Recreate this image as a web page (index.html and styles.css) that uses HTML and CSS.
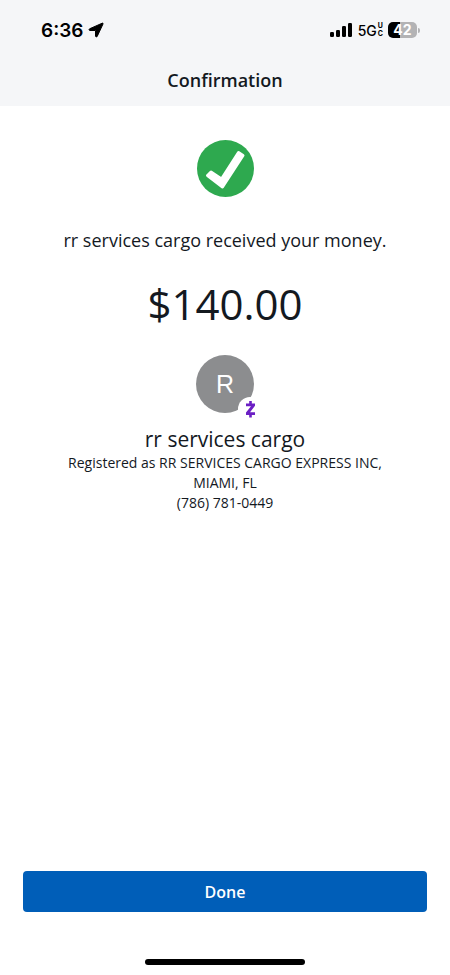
FILE: index.html
```html
<!DOCTYPE html>
<html lang="en">
<head>
<meta charset="utf-8">
<meta name="viewport" content="width=device-width, initial-scale=1">
<title>Confirmation</title>
<link rel="stylesheet" href="styles.css">
</head>
<body>
<div class="screen">
  <header class="top">
    <div class="status">
      <div class="status-group">
        <span class="clock">6:36</span>
        <svg class="location" viewBox="0 0 16 16" width="16" height="16" aria-hidden="true">
          <path d="M14.2 1.2 1.6 6.800c-.8.4-.6 1.700.3 1.700h5.300c.2 0 .3.1.3.3v5.300c0 .9 1.300 1.100 1.700.3L15 2c.3-.6-.2-1.100-.8-.8Z" fill="#000" stroke="#000" stroke-width="1"/>
        </svg>
      </div>
      <div class="status-group">
        <svg viewBox="0 0 24 16" width="24" height="16" aria-hidden="true">
          <rect x="1" y="10" width="4" height="5" rx="1.2"/>
          <rect x="7" y="8" width="4" height="7" rx="1.2"/>
          <rect x="13" y="4" width="4" height="11" rx="1.2"/>
          <rect x="19" y="1" width="4" height="14" rx="1.2"/>
        </svg>
        <span class="network">5G<span class="uc"><span>U</span><span>C</span></span></span>
        <span class="battery"><span class="battery-body">42</span><span class="battery-tip"></span></span>
      </div>
    </div>
    <h1 class="title">Confirmation</h1>
  </header>

  <main class="content">
    <svg class="check" viewBox="0 0 57 57" width="57" height="57" role="img" aria-label="Success">
      <circle cx="28.5" cy="28.5" r="28.5" fill="#2ea94f"/>
      <path d="M10.500 35.500 14 32 24.500 39 41.500 12.500 46 15.500 25.500 47Z" fill="#fff" stroke="#fff" stroke-width="3" stroke-linejoin="round"/>
    </svg>
    <p class="message">rr services cargo received your money.</p>
    <p class="amount">$140.00</p>
    <div class="avatar">
      <span>R</span>
      <svg class="badge" viewBox="0 0 24 24" width="24" height="24" role="img" aria-label="Zelle">
        <circle cx="12" cy="12" r="12" fill="#fff"/>
        <path d="M8 6.500h9v2.300L12 15.200h5V18H8v-2.500L13 9.300H8ZM11.200 4h2.600v3h-2.600ZM11.200 17h2.600v3.500h-2.600Z" fill="#6b1fc4"/>
      </svg>
    </div>
    <h2 class="name">rr services cargo</h2>
    <p class="details">Registered as RR SERVICES CARGO EXPRESS INC, MIAMI, FL</p>
    <p class="details">(786) 781-0449</p>
  </main>

  <footer class="bottom">
    <button class="done" type="button">Done</button>
    <div class="home-bar"></div>
  </footer>
</div>
</body>
</html>
```
FILE: styles.css
```css
* {
  box-sizing: border-box;
}

body,
h1,
h2,
p {
  margin: 0;
}

body {
  background: #fff;
  color: #14191f;
  font-family: "Open Sans", sans-serif;
}

.screen {
  display: flex;
  flex-direction: column;
  min-height: 100vh;
}

.top {
  background: #f5f6f8;
  padding: 18px 30px 12px 41px;
}

.status {
  display: flex;
  align-items: center;
  justify-content: space-between;
  height: 24px;
  color: #000;
  font-family: Inter, sans-serif;
}

.status-group {
  display: flex;
  align-items: center;
  gap: 5px;
}

.clock {
  font-size: 19px;
  font-weight: 600;
}

.network {
  display: flex;
  align-items: center;
  font-size: 14px;
  font-weight: 500;
}

.uc {
  display: flex;
  flex-direction: column;
  padding-left: 1px;
  font-size: 7px;
  font-weight: 700;
  line-height: 8px;
}

.battery {
  display: flex;
  align-items: center;
  gap: 1px;
}

.battery-body {
  width: 29px;
  border-radius: 5px;
  background: linear-gradient(90deg, #000 42%, #b3b3b5 42%);
  color: #fff;
  font-size: 14px;
  font-weight: 700;
  line-height: 16px;
  text-align: center;
}

.battery-tip {
  width: 2px;
  height: 5px;
  border-radius: 0 2px 2px 0;
  background: #b3b3b5;
}

.title {
  margin: 24px 11px 0 0;
  font-size: 18px;
  font-weight: 600;
  line-height: 28px;
  text-align: center;
}

.content {
  display: flex;
  flex: 1;
  flex-direction: column;
  align-items: center;
  padding: 34px 56px;
  text-align: center;
}

.message {
  margin-top: 30px;
  font-size: 18px;
  line-height: 26px;
}

.amount {
  margin-top: 23px;
  font-size: 42px;
  line-height: 56px;
}

.avatar {
  position: relative;
  display: grid;
  place-items: center;
  width: 58px;
  height: 58px;
  margin-top: 23px;
  border-radius: 50%;
  background: #8c8d8f;
  color: #fff;
  font-family: "Liberation Sans", sans-serif;
  font-size: 25px;
}

.badge {
  position: absolute;
  right: -8px;
  bottom: -8px;
}

.name {
  margin-top: 12px;
  font-size: 21px;
  font-weight: 400;
  line-height: 28px;
}

.details {
  font-size: 14px;
  line-height: 20px;
}

.bottom {
  display: flex;
  flex-direction: column;
  align-items: center;
  gap: 47px;
  padding: 0 23px 10px;
}

.done {
  width: 100%;
  height: 41px;
  border: 0;
  border-radius: 4px;
  background: #005eb8;
  color: #fff;
  font: 600 16px/24px "Open Sans", sans-serif;
}

.home-bar {
  width: 160px;
  height: 6px;
  border-radius: 3px;
  background: #000;
}
```
